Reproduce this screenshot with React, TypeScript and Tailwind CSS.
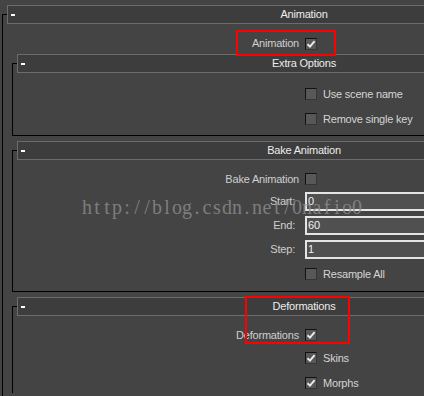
import type { ReactNode } from 'react'

const MARK = 'http://blog.csdn.net/0nafio0'

function Check({ on }: { on?: boolean }) {
  return (
    <span className="inline-flex h-[12px] w-[12px] shrink-0 items-center justify-center border border-t-[#121212] border-l-[#121212] border-r-[#363636] border-b-[#363636] bg-[#585858]">
      {on && (
        <svg width="10" height="10" viewBox="0 0 10 10" aria-hidden>
          <path d="M1.5 5.2 L4 7.6 L8.6 2.2" fill="none" stroke="#ececec" strokeWidth="1.9" />
        </svg>
      )}
    </span>
  )
}

function CheckRow({ lw, left, right, on, className = '' }: { lw: string; left?: string; right?: string; on?: boolean; className?: string }) {
  return (
    <div className={`flex h-[20px] items-center ${className}`}>
      <div className={`${lw} shrink-0 pr-[6px] text-right text-[#cfcfcf]`}>{left}</div>
      <Check on={on} />
      {right && <span className="ml-[6px] text-[#d4d4d4]">{right}</span>}
    </div>
  )
}

function Spinner({ lw, label, value, className = '' }: { lw: string; label: string; value: string; className?: string }) {
  return (
    <div className={`flex h-[19px] items-center ${className}`}>
      <div className={`${lw} shrink-0 pr-[10px] text-right text-[#cfcfcf]`}>{label}</div>
      <div className="h-[19px] flex-1 border-2 border-[#e4e4e4] bg-[#505050] pl-[1px] leading-[15px] text-[#f0f0f0]">{value}</div>
    </div>
  )
}

function Rollout({ title, inner, children, className = '', body = '' }: { title: string; inner?: boolean; children: ReactNode; className?: string; body?: string }) {
  return (
    <div className={`flex flex-col ${className}`}>
      <div className="flex h-[19px]">
        <div className="mt-[9px] w-[5px] border-l border-t border-black" />
        <div className="grid flex-1 grid-cols-[1fr_auto_1fr] items-center border border-[#6c6c6c] bg-[#3d3d3d] text-[#ececec]">
          <div className="pl-[3px]">
            <div className="h-[2px] w-[4px] bg-white" />
          </div>
          <span className="leading-none">{title}</span>
          <div />
        </div>
      </div>
      <div className={`flex-1 border-l border-black ${inner ? 'border-b' : ''} ${body}`}>{children}</div>
    </div>
  )
}

export default function App() {
  return (
    <div className="relative h-[396px] w-[424px] overflow-hidden bg-[#444444] pl-[2px] pt-[5px] font-['Liberation_Sans',Arial,sans-serif] text-[11px] tracking-[-0.2px]">
      <div className="flex h-[420px] w-[599px]">
        <Rollout title="Animation" className="flex-1" body="pl-[9px] pr-[10px]">
          <CheckRow lw="w-[293px]" left="Animation" on className="mt-[9px] h-[21px]" />

          <Rollout title="Extra Options" inner body="pt-[11px] pb-[6px]">
            <CheckRow lw="w-[292px]" right="Use scene name" />
            <CheckRow lw="w-[292px]" right="Remove single key" className="mt-[5px]" />
          </Rollout>

          <Rollout title="Bake Animation" inner className="mt-[5px]" body="pt-[9px] pb-[7px]">
            <CheckRow lw="w-[292px]" left="Bake Animation" />
            <Spinner lw="w-[292px]" label="Start:" value="0" className="mt-[3px]" />
            <Spinner lw="w-[292px]" label="End:" value="60" className="mt-[5px]" />
            <Spinner lw="w-[292px]" label="Step:" value="1" className="mt-[5px]" />
            <CheckRow lw="w-[292px]" right="Resample All" className="mt-[5px]" />
          </Rollout>

          <Rollout title="Deformations" className="mt-[5px]" body="pt-[9px]">
            <CheckRow lw="w-[292px]" left="Deformations" on />
            <CheckRow lw="w-[292px]" right="Skins" on className="mt-[3px]" />
            <CheckRow lw="w-[292px]" right="Morphs" on className="mt-[5px]" />
          </Rollout>
        </Rollout>
      </div>

      {/* annotations drawn over the screenshot */}
      <div className="absolute left-[236px] top-[30px] h-[26px] w-[100px] border-2 border-[#ff0000]" />
      <div className="absolute left-[245px] top-[296px] h-[48px] w-[105px] border-2 border-[#ff0000]" />
      <div className="pointer-events-none absolute left-[82px] top-[197px] flex whitespace-nowrap font-['Liberation_Serif',serif] text-[20px] leading-none tracking-normal text-[#8e8e8e]/80">
        {MARK.split('').map((c, i) => (
          <span key={i} className="inline-block w-[10px] text-center">
            {c}
          </span>
        ))}
      </div>
    </div>
  )
}
